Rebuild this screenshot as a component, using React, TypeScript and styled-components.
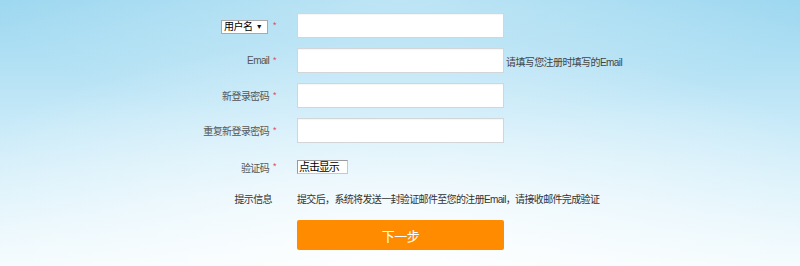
import React from "react";
import styled, { createGlobalStyle } from "styled-components";

const GlobalStyle = createGlobalStyle`
  html, body {
    margin: 0;
    padding: 0;
  }
  body {
    font-family: "Liberation Sans", "Noto Sans CJK SC", sans-serif;
    font-size: 10px;
  }
`;

const Page = styled.div`
  width: 800px;
  height: 266px;
  overflow: hidden;
  box-sizing: border-box;
  padding-top: 13px;
  background:
    radial-gradient(ellipse 520px 230px at 50% 100%, rgba(255, 255, 255, 0.85), rgba(255, 255, 255, 0) 100%),
    radial-gradient(ellipse 420px 120px at 50% 0%, rgba(255, 255, 255, 0.35), rgba(255, 255, 255, 0) 100%),
    linear-gradient(180deg, #9bd7f0 0%, #c6e9f8 45%, #f3fbfe 100%);
`;

const Form = styled.form`
  display: flex;
  flex-direction: column;
  gap: 10px;
`;

const Row = styled.div<{ h: number; mt?: number }>`
  display: grid;
  grid-template-columns: 297px 207px auto;
  align-items: center;
  height: ${(p) => p.h}px;
  margin-top: ${(p) => p.mt ?? 0}px;
`;

const Label = styled.label<{ dark?: boolean }>`
  display: flex;
  justify-content: flex-end;
  align-items: center;
  padding-right: ${(p) => (p.dark ? 25 : 21)}px;
  color: ${(p) => (p.dark ? "#333" : "#555")};
  font-size: 10px;
  letter-spacing: -0.6px;
  white-space: nowrap;
`;

const Star = styled.span`
  color: #e8445a;
  font-size: 9px;
  margin-left: 4px;
  position: relative;
  top: -1px;
`;

const Input = styled.input`
  box-sizing: border-box;
  width: 207px;
  height: 25px;
  margin: 0;
  border: 1px solid #d3d6d8;
  background: #fff;
  box-shadow: inset 0 1px 1px rgba(0, 0, 0, 0.04);
  outline: none;
`;

const Note = styled.span`
  padding-left: 2px;
  color: #444;
  font-size: 10px;
  letter-spacing: -0.6px;
  white-space: nowrap;
  position: relative;
  top: 1px;
`;

const SelectWrap = styled.span`
  position: relative;
  display: inline-flex;
  width: 47px;
  height: 14px;
  margin-right: 1px;
  top: 1px;
`;

const Select = styled.select`
  appearance: none;
  box-sizing: border-box;
  width: 47px;
  height: 14px;
  margin: 0;
  padding: 0 0 0 2px;
  border: 1px solid #a9a9a9;
  border-radius: 0;
  background: #fff;
  color: #000;
  font-family: "Liberation Sans", "Noto Sans CJK SC", sans-serif;
  font-size: 10px;
  letter-spacing: -0.6px;
  line-height: 12px;
  outline: none;
`;

const Caret = styled.span`
  position: absolute;
  right: 6px;
  top: 3px;
  font-size: 7px;
  line-height: 8px;
  color: #111;
  pointer-events: none;
`;

const CodeButton = styled.button`
  box-sizing: border-box;
  width: 51px;
  height: 14px;
  margin: 0;
  padding: 0 0 0 1px;
  border: 1px solid #9a9a9a;
  border-right-color: #c8c8c8;
  border-bottom-color: #c8c8c8;
  background: #fff;
  color: #000;
  text-align: left;
  font-family: "Liberation Sans", "Noto Sans CJK SC", sans-serif;
  font-size: 11px;
  letter-spacing: -1.1px;
  line-height: 12px;
`;

const HintText = styled.span`
  grid-column: 2 / 4;
  color: #333;
  font-size: 10px;
  letter-spacing: -0.65px;
  white-space: nowrap;
`;

const Submit = styled.button`
  box-sizing: border-box;
  width: 207px;
  height: 30px;
  margin: 0;
  border: none;
  border-radius: 2px;
  background: #ff8c00;
  color: #fff;
  font-family: "Liberation Sans", "Noto Sans CJK SC", sans-serif;
  font-size: 13px;
  letter-spacing: -0.5px;
  cursor: pointer;
`;

const App: React.FC = () => {
  return (
    <>
      <GlobalStyle />
      <Page>
        <Form onSubmit={(e) => e.preventDefault()}>
          <Row h={25}>
            <Label>
              <SelectWrap>
                <Select defaultValue="username">
                  <option value="username">用户名</option>
                  <option value="mobile">手机号</option>
                </Select>
                <Caret>▼</Caret>
              </SelectWrap>
              <Star>*</Star>
            </Label>
            <Input type="text" />
          </Row>
          <Row h={25}>
            <Label>
              Email<Star>*</Star>
            </Label>
            <Input type="text" />
            <Note>请填写您注册时填写的Email</Note>
          </Row>
          <Row h={25}>
            <Label>
              新登录密码<Star>*</Star>
            </Label>
            <Input type="password" />
          </Row>
          <Row h={25}>
            <Label>
              重复新登录密码<Star>*</Star>
            </Label>
            <Input type="password" />
          </Row>
          <Row h={28}>
            <Label>
              验证码<Star>*</Star>
            </Label>
            <div>
              <CodeButton type="button">点击显示</CodeButton>
            </div>
          </Row>
          <Row h={14}>
            <Label dark>提示信息</Label>
            <HintText>
              提交后，系统将发送一封验证邮件至您的注册Email，请接收邮件完成验证
            </HintText>
          </Row>
          <Row h={30} mt={5}>
            <span />
            <Submit type="submit">下一步</Submit>
          </Row>
        </Form>
      </Page>
    </>
  );
};

export default App;
